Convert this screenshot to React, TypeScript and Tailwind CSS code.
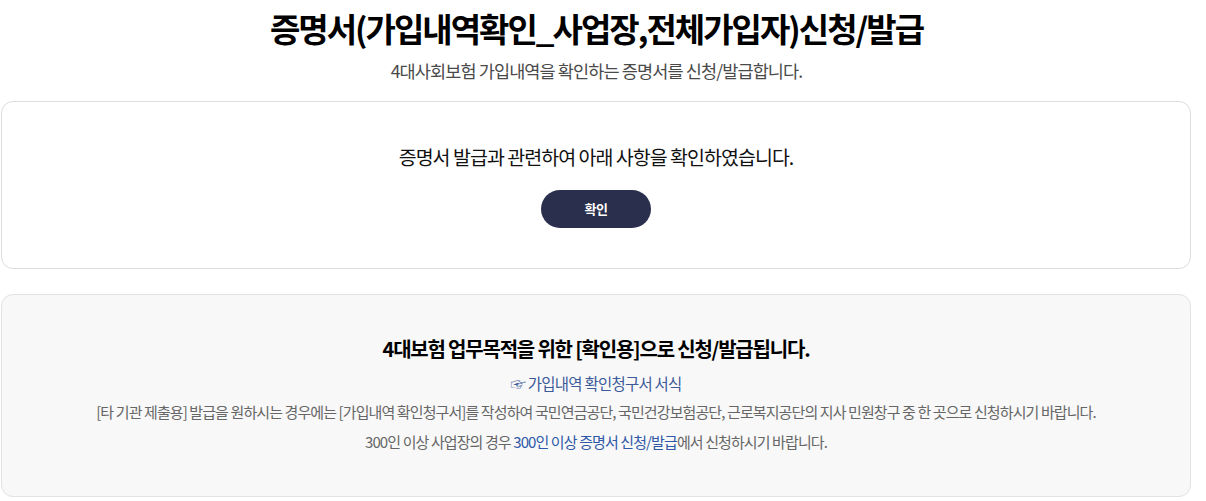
const App = () => {
  return (
    <div
      className="w-[1192px] bg-white text-[#222] pl-px"
      style={{ fontFamily: '"Noto Sans CJK KR", "Noto Sans", sans-serif' }}
    >
      <div className="flex flex-col items-center pt-[6px]">
        <h1 className="text-[33px] font-bold leading-[44px] tracking-[-0.06em] text-black">
          증명서(가입내역확인_사업장,전체가입자)신청/발급
        </h1>
        <p className="mt-[10px] text-[17.5px] leading-[22px] tracking-[-0.05em] text-[#4a4a4a]">
          4대사회보험 가입내역을 확인하는 증명서를 신청/발급합니다.
        </p>
      </div>

      <div className="mt-[19px] flex h-[168px] w-[1190px] flex-col items-center rounded-[12px] border border-[#dddddd] bg-white pt-[42px]">
        <p className="text-[19.5px] leading-[26px] tracking-[-0.05em] text-[#111]">
          증명서 발급과 관련하여 아래 사항을 확인하였습니다.
        </p>
        <button className="mt-[20px] h-[38px] w-[110px] rounded-full bg-[#2a2f4d] text-[13px] font-bold tracking-[-0.03em] text-white">
          확인
        </button>
      </div>

      <div className="mt-[25px] flex h-[203px] w-[1190px] flex-col items-center rounded-[12px] border border-[#e2e2e2] bg-[#f8f8f8] pt-[40px]">
        <h2 className="text-[20px] font-bold leading-[28px] tracking-[-0.06em] text-black">
          4대보험 업무목적을 위한 [확인용]으로 신청/발급됩니다.
        </h2>
        <a className="mt-[10px] text-[15.5px] leading-[20px] tracking-[-0.05em] text-[#3c5a99]">
          ☞ 가입내역 확인청구서 서식
        </a>
        <p className="mt-[9px] text-[15px] leading-[20px] tracking-[-0.06em] text-[#666]">
          [타 기관 제출용] 발급을 원하시는 경우에는 [가입내역 확인청구서]를 작성하여 국민연금공단, 국민건강보험공단, 근로복지공단의 지사 민원창구 중 한 곳으로 신청하시기 바랍니다.
        </p>
        <p className="mt-[10px] text-[15px] leading-[20px] tracking-[-0.06em] text-[#666]">
          300인 이상 사업장의 경우 <span className="text-[#2f58a8]">300인 이상 증명서 신청/발급</span>에서 신청하시기 바랍니다.
        </p>
      </div>
    </div>
  );
};

export default App;
